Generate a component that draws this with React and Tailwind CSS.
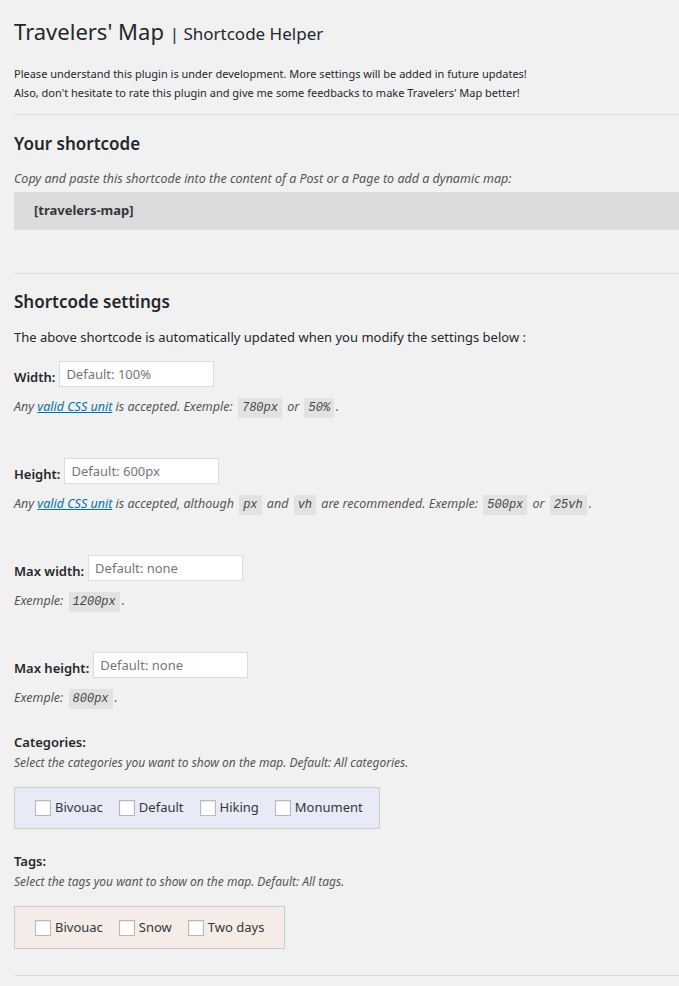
const font = { fontFamily: '"Noto Sans", "Open Sans", sans-serif' };

function Code({ children }) {
  return (
    <code className="bg-[#e2e2e2] px-[4px] py-[3px] mx-[2px] text-[12px] not-italic font-['Liberation_Mono',monospace] text-[#444]">
      <i>{children}</i>
    </code>
  );
}

function Field({ label, placeholder, children, first }) {
  return (
    <div className={first ? "mt-[14px]" : "mt-[40px]"}>
      <div className="flex items-end">
        <label className="text-[13px] font-semibold leading-[20px] text-[#23282d]">{label}</label>
        <input
          type="text"
          placeholder={placeholder}
          className="ml-[4px] w-[155px] h-[26px] bg-white border border-[#ddd] px-[6px] text-[13px] placeholder:text-[#72777c] outline-none"
        />
      </div>
      <p className="mt-[10px] text-[12.5px] italic leading-[20px] text-[#555]">{children}</p>
    </div>
  );
}

function Check({ label }) {
  return (
    <label className="flex items-center">
      <span className="w-[16px] h-[16px] bg-white border border-[#b4b9be] shadow-[inset_0_1px_2px_rgba(0,0,0,0.1)]" />
      <span className="ml-[4px] text-[13px] text-[#32373c]">{label}</span>
    </label>
  );
}

export default function App() {
  return (
    <div className="min-h-screen bg-[#f1f1f1] pl-[14px] pb-[10px] text-[#23282d]" style={font}>
      <h1 className="pt-[17px] text-[22px] leading-[29px] font-normal">
        Travelers' Map <span className="text-[17px]">| Shortcode Helper</span>
      </h1>
      <div className="mt-[16px] text-[11px] leading-[19px]">
        <p>Please understand this plugin is under development. More settings will be added in future updates!</p>
        <p>Also, don't hesitate to rate this plugin and give me some feedbacks to make Travelers' Map better!</p>
      </div>
      <hr className="mt-[12px] border-t border-[#dcdcdc]" />

      <h2 className="mt-[17px] text-[17px] font-semibold leading-[23px]">Your shortcode</h2>
      <p className="mt-[14px] text-[12.5px] italic leading-[20px] text-[#555]">
        Copy and paste this shortcode into the content of a Post or a Page to add a dynamic map:
      </p>
      <div className="mt-[3px] h-[38px] bg-[#dcdcdc] pl-[20px] flex items-center text-[13px] font-bold text-[#32373c]">
        [travelers-map]
      </div>
      <hr className="mt-[43px] border-t border-[#dcdcdc]" />

      <h2 className="mt-[16px] text-[17px] font-semibold leading-[23px]">Shortcode settings</h2>
      <p className="mt-[14px] text-[13px] leading-[20px]">
        The above shortcode is automatically updated when you modify the settings below :
      </p>

      <Field label="Width:" placeholder="Default: 100%" first>
        Any <a className="text-[#0073aa] underline">valid CSS unit</a> is accepted. Exemple: <Code>780px</Code> or <Code>50%</Code>.
      </Field>
      <Field label="Height:" placeholder="Default: 600px">
        Any <a className="text-[#0073aa] underline">valid CSS unit</a> is accepted, although <Code>px</Code> and <Code>vh</Code> are recommended. Exemple: <Code>500px</Code> or <Code>25vh</Code>.
      </Field>
      <Field label="Max width:" placeholder="Default: none">
        Exemple: <Code>1200px</Code>.
      </Field>
      <Field label="Max height:" placeholder="Default: none">
        Exemple: <Code>800px</Code>.
      </Field>

      <h3 className="mt-[23px] text-[13px] font-semibold leading-[20px]">Categories:</h3>
      <p className="mt-px text-[12px] italic leading-[20px] text-[#555]">
        Select the categories you want to show on the map. Default: All categories.
      </p>
      <div className="mt-[14px] w-[366px] h-[42px] bg-[#e8eaf5] border border-[#ccc] pl-[20px] flex items-center gap-[16px]">
        <Check label="Bivouac" />
        <Check label="Default" />
        <Check label="Hiking" />
        <Check label="Monument" />
      </div>

      <h3 className="mt-[22px] text-[13px] font-semibold leading-[20px]">Tags:</h3>
      <p className="mt-px text-[12px] italic leading-[20px] text-[#555]">
        Select the tags you want to show on the map. Default: All tags.
      </p>
      <div className="mt-[14px] w-[271px] h-[43px] bg-[#f5ece7] border border-[#ccc] pl-[20px] flex items-center gap-[16px]">
        <Check label="Bivouac" />
        <Check label="Snow" />
        <Check label="Two days" />
      </div>
      <hr className="mt-[26px] border-t border-[#dcdcdc]" />
    </div>
  );
}
